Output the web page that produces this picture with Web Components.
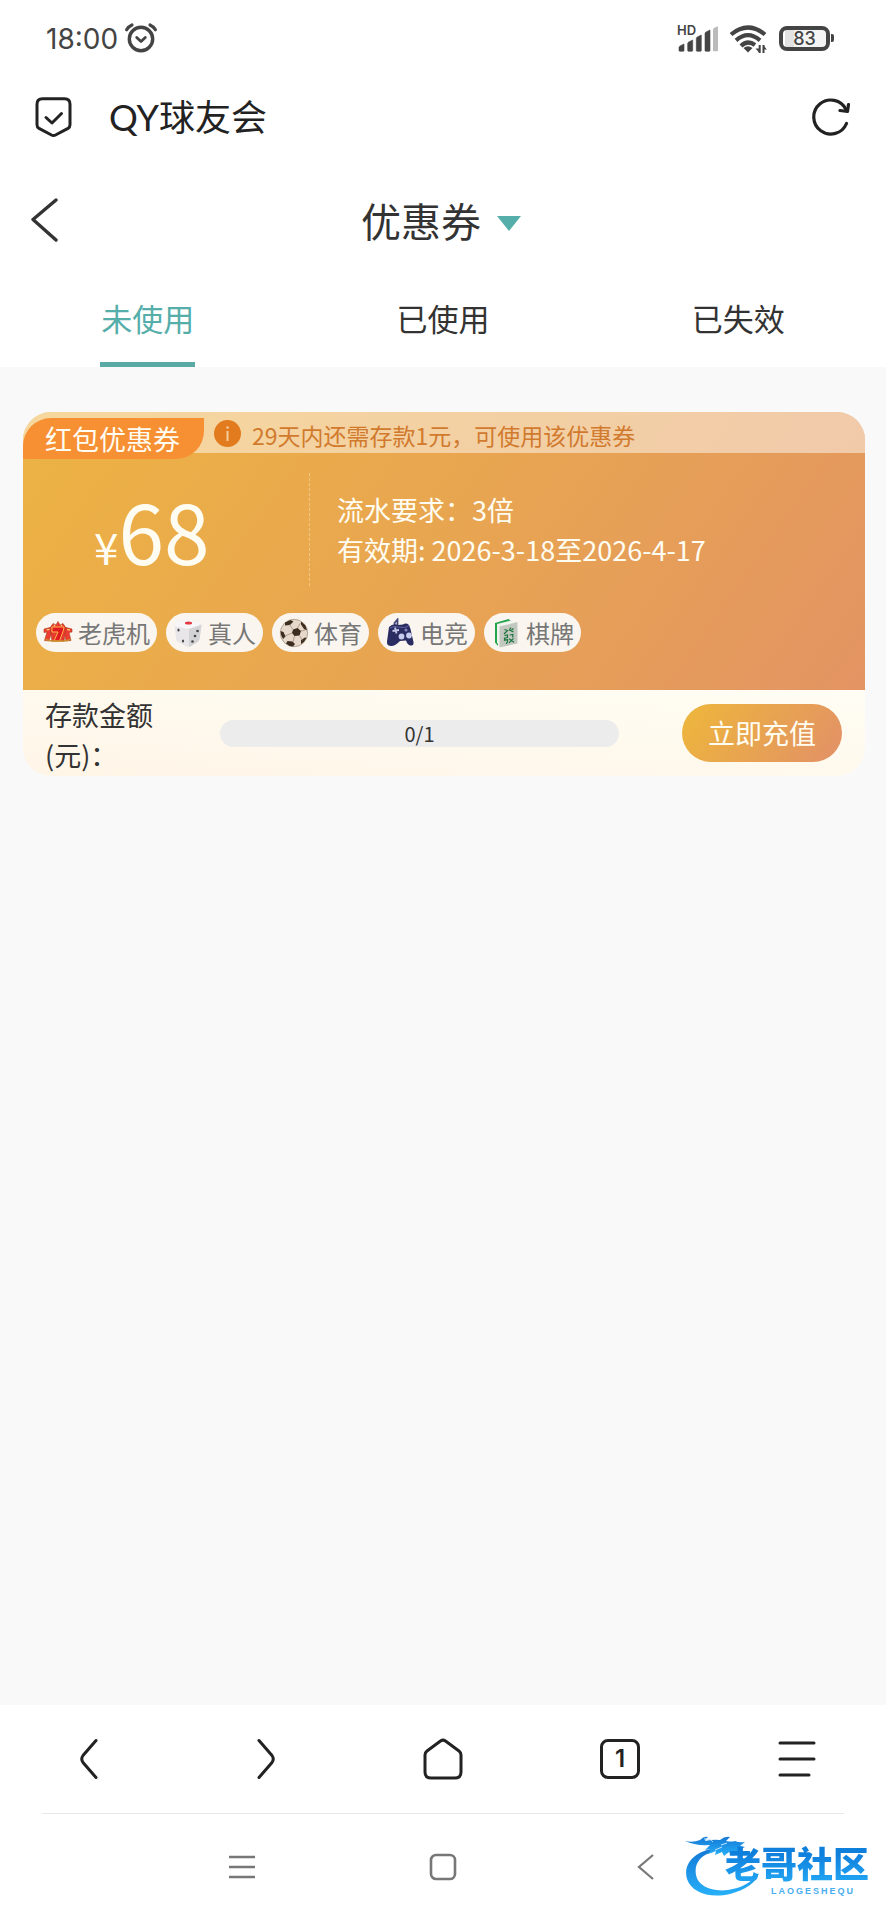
<!DOCTYPE html>
<html lang="zh-CN">
<head>
<meta charset="utf-8">
<meta name="viewport" content="width=device-width, initial-scale=1">
<title>优惠券</title>
<style>
body { margin: 0; font-family: "Noto Sans CJK SC", "Noto Sans", sans-serif; color: #333; }
</style>
</head>
<body>
<coupon-app></coupon-app>
<script>
const RESET = `
*, *::before, *::after { box-sizing: border-box; }
button { font: inherit; color: inherit; background: none; border: 0; padding: 0; margin: 0; cursor: pointer; }
svg { display: block; flex: none; }
`;

function define(name, css, html, setup) {
  const template = document.createElement('template');
  template.innerHTML = `<style>${RESET}${css}</style>${html}`;
  customElements.define(name, class extends HTMLElement {
    constructor() {
      super();
      this.attachShadow({ mode: 'open' }).append(template.content.cloneNode(true));
    }
    connectedCallback() { if (setup) setup(this, this.shadowRoot); }
  });
}

define('status-bar', `
:host { display: flex; align-items: center; justify-content: space-between; height: 76px; padding: 0 52px 0 46px; color: #444; }
.side { display: flex; align-items: center; }
.time { font: 400 28px/40px Inter, sans-serif; padding-top: 2px; margin-right: 6px; }
.signal { margin-right: 10px; }
.wifi { margin-right: 12px; }
.battery { display: flex; align-items: center; justify-content: center; width: 51px; height: 25px; border: 4px solid #444; border-radius: 8px;
  background: linear-gradient(90deg, transparent 2px, #e2e2e2 2px, #e2e2e2 11px, #f4f4f4 11px); font: 500 18px/20px Inter, sans-serif; padding-top: 1px; }
.nub { width: 3px; height: 8px; margin-left: 1px; background: #444; border-radius: 0 2px 2px 0; }
`, `
<div class="side">
  <span class="time">18:00</span>
  <svg width="34" height="32" viewBox="0 0 34 32" fill="none" stroke="#444" stroke-linecap="round">
    <circle cx="17" cy="17" r="11.7" stroke-width="3.4"/>
    <path d="M12.7 15.5l4.3 4 4.3-4" stroke-width="2.8" stroke-linejoin="round"/>
    <path d="M2.6 7.7Q4.5 4.500 8 3M31.400 7.700Q29.500 4.500 26 3" stroke-width="3.200"/>
  </svg>
</div>
<div class="side">
  <svg class="signal" width="42" height="30" viewBox="0 0 42 30" fill="#444">
    <text x="0" y="12" font-family="Inter, sans-serif" font-weight="600" font-size="13">HD</text>
    <path d="M2 27.500v-3q0-1 1-1.500l4-2v6.500q0 .8-.8.8h-3.400q-.8 0-.8-.8zM10.700 27.500v-7q0-1 1-1.500l4-2v10.500q0 .8-.8.8h-3.400q-.8 0-.8-.8zM19.300 27.500v-12q0-1 1-1.500l4-2v15.500q0 .8-.8.8h-3.400q-.8 0-.8-.8zM28 27.500v-17q0-1 1-1.500l4-2v20.500q0 .8-.8.8h-3.400q-.8 0-.8-.8z" stroke="#444" stroke-width=".6"/>
    <path d="M36 27.500v-21q0-1 1-1.500l3-1.500q1-.4 1 1v23q0 .8-.8.8h-3.400q-.8 0-.8-.8z" fill="#bbb"/>
  </svg>
  <svg class="wifi" width="38" height="30" viewBox="0 0 38 30" fill="none" stroke="#444" stroke-width="4.200">
    <path d="M2 11.500Q19-2.500 36 11.500"/>
    <path d="M7 17.300Q19 7 31 17.300"/>
    <path d="M12 23Q18.500 16.500 26 22"/>
    <path d="M14.500 25q4.500-3.400 9 0L19 29.500z" fill="#444" stroke="none"/>
    <path d="M30.700 22v8M34.500 30v-8" stroke-width="2"/>
    <path d="M26.500 25.500l4 4.500v-4.500zM37.800 26.500l-3.500-4.500v4.500z" fill="#444" stroke="none"/>
  </svg>
  <div class="battery">83</div><i class="nub"></i>
</div>
`);

define('browser-bar', `
:host { display: flex; align-items: center; height: 82px; padding: 0 36px 0 35px; color: #222; }
.name { flex: 1; margin-left: 37px; font: 400 36px/52px Lato, "Noto Sans CJK SC", sans-serif; }
`, `
<svg width="37" height="40" viewBox="0 0 37 40" fill="none" stroke="#222" stroke-width="3" stroke-linejoin="round" stroke-linecap="round">
  <path d="M7.500 1.700h22q5.500 0 5.500 5.500v20.500q0 2.500-2 3.700L20.500 38q-2 1-4 0L4 31.400q-2-1.200-2-3.700V7.200q0-5.500 5.500-5.500z"/>
  <path d="M11 20.500l6 5.500 9.500-9.500"/>
</svg>
<span class="name">QY球友会</span>
<button aria-label="刷新">
  <svg width="39" height="40" viewBox="0 0 39 40" fill="none" stroke="#222" stroke-width="3.200" stroke-linecap="round" stroke-linejoin="round">
    <path d="M35.500 26.500A17 17 0 1 1 35 12.500"/>
    <path d="M29 13.500l7.500 1 1-7"/>
  </svg>
</button>
`);

define('page-title', `
:host { display: grid; grid-template-columns: 1fr auto 1fr; align-items: center; height: 126px; padding: 0 34px 2px 30px; }
.back { justify-self: start; }
.title { display: flex; align-items: center; gap: 16px; font-size: 40px; line-height: 56px; }
h1 { font: inherit; margin: 0; }
.arrow { margin-top: 6px; }
`, `
<button class="back" aria-label="返回">
  <svg width="30" height="44" viewBox="0 0 30 44" fill="none" stroke="#333" stroke-width="3.400" stroke-linecap="round" stroke-linejoin="round"><path d="M26 2L3 21.500 26 42"/></svg>
</button>
<button class="title">
  <h1><slot></slot></h1>
  <svg class="arrow" width="24" height="15" viewBox="0 0 24 15"><path d="M0 0h24L12 15z" fill="#55aeaa"/></svg>
</button>
`);

define('tab-list', `
:host { display: grid; grid-template-columns: repeat(3, 1fr); }
button { display: flex; justify-content: center; font-size: 31px; }
span { height: 83px; line-height: 68px; padding: 0 1px; border-bottom: 5px solid transparent; }
[aria-selected=true] span { color: #55aeaa; border-color: #5ba9a5; }
`, `
<button role="tab" aria-selected="true"><span>未使用</span></button>
<button role="tab" aria-selected="false"><span>已使用</span></button>
<button role="tab" aria-selected="false"><span>已失效</span></button>
`, (el, root) => {
  el.setAttribute('role', 'tablist');
  const tabs = [...root.querySelectorAll('button')];
  tabs.forEach(tab => tab.onclick = () => tabs.forEach(t => t.setAttribute('aria-selected', t === tab)));
});

const ICONS = {
  slots: `<g stroke="#a8401c" stroke-width=".6" stroke-linejoin="round">
    <path d="M1 11l8-2v4l-3 10-4.500-.5L4 14l-3 .6z" fill="#ed3c32"/>
    <path d="M29 11l-8-2v4l2 10 5-.5-2-8 3-.5z" fill="#ed3c32"/>
    <path d="M7 10l3-4.500 3 1.500 2-3.500L17 7l3-1.500 3 4.500-2 13H9z" fill="#e83a2d"/>
    <path d="M9 9h12l-1 4.500-3.500 9.500h-5.500l4-9H9z" fill="#e01a20" stroke="#ffb84d" stroke-width="1"/></g>
    <path d="M2.500 21.500l6 1.500h13l6-1.500" stroke="#c98a2a" stroke-width="1.600" fill="none"/>
    <path d="M11 7l1 1M19 7l-1 1M3.500 12l3-.6M24 11.500l3 .6" stroke="#ffd97b" stroke-width="1.200"/>`,
  dice: `<path d="M1.500 7q0-2 2-2.700L13 1.500q2-.5 4 .2l10 3q2 .8 1.500 3L26.500 21q-.4 2-2 3l-7.500 4.700q-1.500.8-3 0L5 24q-1.500-.8-1.800-2.500z" fill="#e8e6e8"/>
    <path d="M1.500 7q0-2 2-2.700L13 1.500q2-.5 4 .2l10 3q1 .8.5 1.600L16 11 3 8.500z" fill="#f8f7f7"/>
    <path d="M16 11l12.500-4-2 14q-.4 2-2 3L16 29z" fill="#d3d2d5"/>
    <ellipse cx="15.500" cy="5" rx="3.600" ry="1.500" fill="#e23a40"/>
    <g fill="#444"><ellipse cx="5.500" cy="12" rx="1.100" ry="1.500"/><ellipse cx="10" cy="23" rx="1.100" ry="1.500"/><circle cx="19.500" cy="23.500" r="1.300"/><circle cx="24.500" cy="13" r="1.300"/><circle cx="22" cy="18" r="1.300"/></g>`,
  ball: `<circle cx="15" cy="15" r="13.700" fill="#e6d9cb" stroke="#8d7867" stroke-width=".6"/>
    <g fill="#3d2c20"><path d="M14 11.500l4.500-1.500 3.500 3-1.500 4.500-5 .5-2.500-3z"/><path d="M6 4.500l5.500-2.500 3 1.500-3.500 3.500-5 .5zM22 3.500l4.500 4 1.500 5-3-1.500-3-4.500zM1.500 13l3 1 2 4.500-2.500 2.500q-2.500-3.500-2.500-8zM8.500 23l5 .5 2.500 2.500-2 2.500q-4 0-7-3zM22 22l4-2.500 1.500.5q-2 4-5.500 6z"/></g>
    <path d="M14 11.500l-3.500-5M18.500 10l3-5M22 13l4-1M20.500 17.500l3 5M15.500 18l-1.500 6M13 15l-7 3" stroke="#a48c7a" stroke-width=".8" fill="none"/>`,
  pad: `<path d="M10 9l-.5-4 3-3.500V7" stroke="#44467a" stroke-width="1.800" fill="none"/>
    <path d="M4 9q4-4 9-2l5-.5q3-2 6 .5l1.500 4q1.500 7 3 13 .5 4-3 3.500-3-.5-4.500-5l-6 .5q-5 5.500-9.500 5-4-.5-3.500-4.500z" fill="#2a2c62"/>
    <path d="M5 10q4-2.500 8-1l7 .5 4-2" stroke="#5f629e" fill="none"/>
    <path d="M7.500 13l6.500-1M10 9.500l1.500 6" stroke="#c3c7e6" stroke-width="1.800"/>
    <circle cx="16.500" cy="18.500" r="2.900" fill="#c7cbed"/><circle cx="24" cy="17.500" r="2.900" fill="#c7cbed"/><circle cx="21" cy="12" r="1.500" fill="#8587bd"/>`,
  tile: `<path d="M4 5L17.500 1l3 2.500L8 8 7 28l-3-3.500z" fill="#24a34d"/>
    <path d="M6 6L19 2.700l6 1.500L9 9v18.500l-3-2.500z" fill="#eef3eb"/>
    <path d="M8.500 8.500L26.500 4v21.500l-18 4z" fill="#c2c8c0"/>
    <path d="M13.500 11.500l3 1-3.500 3.500M20 9.500l-1.500 2.500 4 2M22.500 10.500l-2 1.500M13.500 17.500l3-.5v2.500l-3 .7v2l3-.5q.5 3-1.500 4M18.800 17l3-.5v3M18 20.800l5 3.500M22.500 20.300l-4.500 4.500" stroke="#19733a" stroke-width="1.200" fill="none"/>`
};

define('game-chip', `
:host { display: flex; align-items: center; gap: 5px; height: 39px; padding: 0 7px; border-radius: 20px; background: #faf6ef; color: #777; font-size: 24px; line-height: 36px; white-space: nowrap; }
`, `<svg width="30" height="30" viewBox="0 0 30 30" aria-hidden="true"></svg><slot></slot>`,
(el, root) => { root.querySelector('svg').innerHTML = ICONS[el.getAttribute('icon')]; });

define('coupon-card', `
:host { display: block; border-radius: 28px; overflow: hidden; font-size: 27px; line-height: 40px; }
.face { background: linear-gradient(125deg, #edb343 0%, #e8a551 50%, #e39463 100%); color: #fffdf2; }
.strip { display: flex; align-items: flex-start; height: 41px; background: rgba(255,255,255,.48); color: #d17a2d; }
.tag { margin-top: 6px; height: 41px; line-height: 42px; padding: 0 24px 0 22px; background: #f78f33; color: #fffdf2; border-radius: 28px 0 28px 0; white-space: nowrap; }
.info { margin: 8px 11px 0 10px; }
.note { font-size: 23px; line-height: 46px; white-space: nowrap; }
.body { padding: 20px 13px 38px; }
.row { display: flex; align-items: center; min-height: 113px; margin-bottom: 27px; }
.amount { width: 273px; height: 113px; padding-left: 58px; line-height: 113px; font-size: 82px; white-space: nowrap; }
.amount small { font-size: 44px; line-height: 44px; }
.terms { flex: 1; display: flex; flex-direction: column; justify-content: center; min-height: 113px; padding-left: 27px; border-left: 1px dashed #f3c77f; }
.chips { display: flex; flex-wrap: wrap; gap: 9px; }
.foot { display: flex; align-items: center; min-height: 86px; padding: 0 23px 0 22px; background: linear-gradient(185deg, #fffdf4, #fff9ed 55%, #fff5e7); }
.label { width: 175px; padding: 5px 50px 1px 0; }
.meter { flex: 1; height: 27px; border-radius: 14px; background: #ececec; text-align: center; font-size: 20px; line-height: 28px; }
.foot button { width: 160px; height: 58px; margin-left: 63px; border-radius: 29px; background: linear-gradient(125deg, #edb33f 10%, #e39463 90%); color: #fffdf2; }
`, `
<div class="face">
  <div class="strip">
    <span class="tag"><slot name="kind"></slot></span>
    <svg class="info" width="27" height="27" viewBox="0 0 27 27"><circle cx="13.500" cy="13.500" r="13.500" fill="#e27a1e"/><circle cx="13.500" cy="7.500" r="1.300" fill="#f6cd9c"/><path d="M13.500 11v10" stroke="#f6cd9c" stroke-width="2"/></svg>
    <span class="note"><slot name="note"></slot></span>
  </div>
  <div class="body">
    <div class="row">
      <div class="amount"><small>¥</small><slot name="amount"></slot></div>
      <div class="terms"><slot name="terms"></slot></div>
    </div>
    <div class="chips"><slot></slot></div>
  </div>
</div>
<div class="foot">
  <div class="label" id="deposit">存款金额(元)：</div>
  <div class="meter" role="progressbar" aria-labelledby="deposit" aria-valuenow="0" aria-valuemax="1"><slot name="progress"></slot></div>
  <button>立即充值</button>
</div>
`);

define('browser-nav', `
:host { display: block; background: #fff; }
nav { display: grid; grid-template-columns: repeat(5, 1fr); justify-items: center; align-items: center; height: 108px; margin: 0; }
hr { margin: 0 42px; border: 0; border-top: 1px solid #e8e8e8; }
.count { width: 40px; height: 40px; border: 3px solid #222; border-radius: 8px; color: #222; font: 600 24px/34px Inter, sans-serif; text-align: center; }
`, `
<nav>
  <button aria-label="后退"><svg width="18" height="42" viewBox="0 0 18 42" fill="none" stroke="#222" stroke-width="3" stroke-linecap="round"><path d="M16 2.500L3 17.500q-2.500 3.500 0 7l13 15"/></svg></button>
  <button aria-label="前进"><svg width="18" height="42" viewBox="0 0 18 42" fill="none" stroke="#222" stroke-width="3" stroke-linecap="round"><path d="M2 2.500l13 15q2.500 3.500 0 7l-13 15"/></svg></button>
  <button aria-label="主页"><svg width="40" height="42" viewBox="0 0 40 42" fill="none" stroke="#222" stroke-width="3" stroke-linejoin="round"><path d="M17.500 3q2.500-1.700 5 0L36 13q2 1.500 2 4v17q0 6-6 6H8q-6 0-6-6V17q0-2.500 2-4z"/></svg></button>
  <button class="count" aria-label="标签页 1">1</button>
  <button aria-label="菜单"><svg width="38" height="42" viewBox="0 0 38 42" fill="none" stroke="#222" stroke-width="3" stroke-linecap="round"><path d="M2 5h34M2 21h34M2 37h29"/></svg></button>
</nav>
<hr>
`);

define('system-nav', `
:host { display: grid; grid-template-columns: 1fr auto 1fr; gap: 174px; align-items: center; height: 106px; background: #fff; }
.recents { justify-self: end; }
.back { justify-self: start; }
`, `
<button class="recents" aria-label="最近任务"><svg width="26" height="28" viewBox="0 0 26 28" stroke="#777" stroke-width="2.600"><path d="M0 4h26M0 14h26M0 24h26"/></svg></button>
<button aria-label="桌面"><svg width="28" height="28" viewBox="0 0 28 28" fill="none" stroke="#777" stroke-width="2.600"><rect x="2" y="2" width="24" height="24" rx="5"/></svg></button>
<button class="back" aria-label="返回上一级"><svg width="28" height="28" viewBox="0 0 28 28" fill="none" stroke="#777" stroke-width="2.200"><path d="M22 2L8 14l14 12"/></svg></button>
`);

define('site-mark', `
:host { display: grid; grid-template-columns: 33px auto; width: 184px; height: 64px; color: #1a8fe6; }
.dragon { grid-area: 1 / 1 / 2 / 3; }
.words { grid-area: 1 / 2 / 2 / 3; display: flex; flex-direction: column; align-items: flex-end; padding-top: 11px; }
b { font: 900 36px/40px "Liberation Sans", "Noto Sans CJK SC", sans-serif; background: linear-gradient(#0f7fdc 20%, #22a5f3 90%); -webkit-background-clip: text; background-clip: text; color: transparent; }
small { font: 700 9px/10px "Liberation Sans", sans-serif; letter-spacing: 2px; color: #49aef0; padding-right: 14px; }
`, `
<svg class="dragon" width="80" height="64" viewBox="0 0 80 64">
  <defs><linearGradient id="blue" x1="0" y1="0" x2="0" y2="1"><stop offset="0" stop-color="#1479d6"/><stop offset="1" stop-color="#27b0f8"/></linearGradient></defs>
  <path d="M26 14C8 18-2 30 2 44c4 13 22 20 43 15C60 55 71 48 74 38 66 48 56 53 43 55 26 57 13 51 11 40 9 29 15 20 28 17z" fill="url(#blue)"/>
  <path d="M0 6q8 2 15-1 4-4 8-3-3 2-3 4 9-2 15-1 5-4 10-3l-4 4q6 1 9 0 4 2 10 1l-5 4 5 1-6 3 5 3-8-1-3 4-4-4-5 4-2-4-7 3 1-4-8 3 3-5-6 1 5-5Q10 11 0 6z" fill="url(#blue)"/>
  <path d="M19 4q6-1 9 3M36 10l6-2M30 15l7-3" stroke="#bfe2fb" stroke-width="1" fill="none"/>
</svg>
<div class="words"><b>老哥社区</b><small>LAOGESHEQU</small></div>
`);

define('coupon-app', `
:host { display: flex; flex-direction: column; min-height: 100vh; background: #fff; position: relative; }
main { flex: 1; background: #f9f9f9; padding: 45px 21px 45px 23px; }
footer { position: relative; }
site-mark { position: absolute; right: 17px; bottom: 21px; }
`, `
<header>
  <status-bar></status-bar>
  <browser-bar></browser-bar>
  <page-title>优惠券</page-title>
  <tab-list></tab-list>
</header>
<main>
  <coupon-card>
    <span slot="kind">红包优惠券</span>
    <span slot="note">29天内还需存款1元，可使用该优惠券</span>
    <span slot="amount">68</span>
    <span slot="terms">流水要求：3倍</span>
    <span slot="terms">有效期: 2026-3-18至2026-4-17</span>
    <game-chip icon="slots">老虎机</game-chip>
    <game-chip icon="dice">真人</game-chip>
    <game-chip icon="ball">体育</game-chip>
    <game-chip icon="pad">电竞</game-chip>
    <game-chip icon="tile">棋牌</game-chip>
    <span slot="progress">0/1</span>
  </coupon-card>
</main>
<footer>
  <browser-nav></browser-nav>
  <system-nav></system-nav>
  <site-mark></site-mark>
</footer>
`);
</script>
</body>
</html>
